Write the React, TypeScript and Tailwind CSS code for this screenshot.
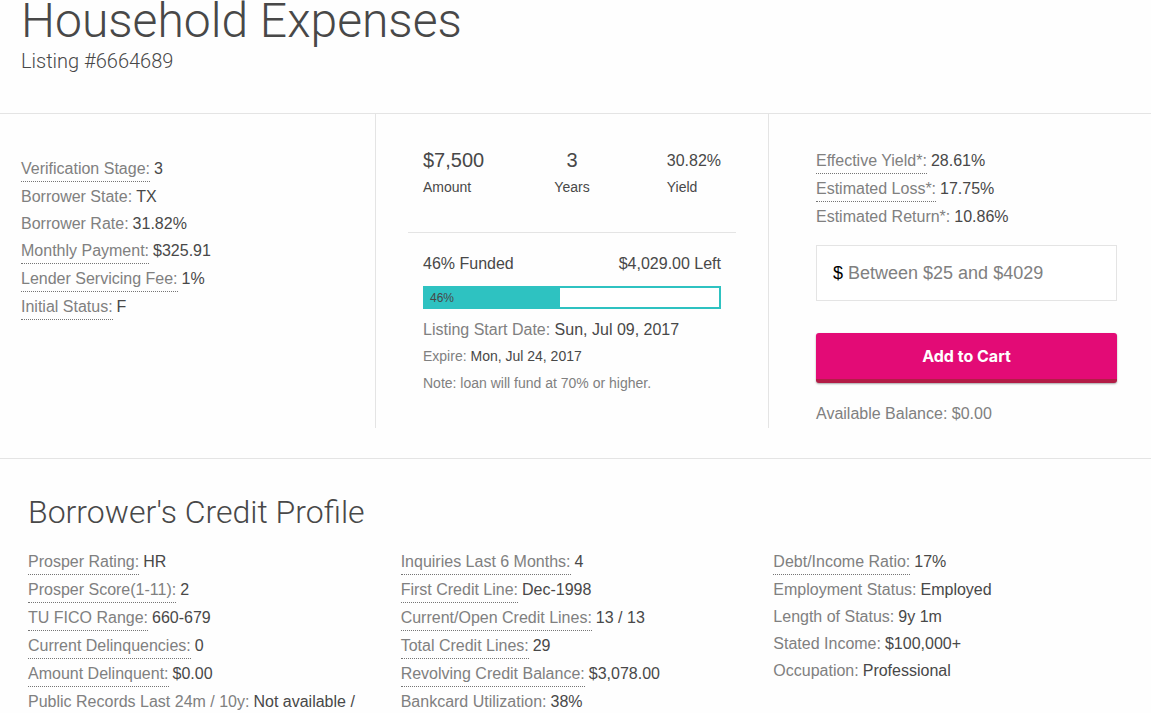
import type { ReactNode } from "react";

type FactProps = { label: string; value: string; hint?: boolean };

const LOAN_FACTS: FactProps[] = [
  { label: "Verification Stage:", value: "3", hint: true },
  { label: "Borrower State:", value: "TX" },
  { label: "Borrower Rate:", value: "31.82%" },
  { label: "Monthly Payment:", value: "$325.91", hint: true },
  { label: "Lender Servicing Fee:", value: "1%", hint: true },
  { label: "Initial Status:", value: "F", hint: true },
];

const RETURN_FACTS: FactProps[] = [
  { label: "Effective Yield*:", value: "28.61%", hint: true },
  { label: "Estimated Loss*:", value: "17.75%", hint: true },
  { label: "Estimated Return*:", value: "10.86%" },
];

const PROFILE: FactProps[][] = [
  [
    { label: "Prosper Rating:", value: "HR", hint: true },
    { label: "Prosper Score(1-11):", value: "2", hint: true },
    { label: "TU FICO Range:", value: "660-679", hint: true },
    { label: "Current Delinquencies:", value: "0", hint: true },
    { label: "Amount Delinquent:", value: "$0.00", hint: true },
    { label: "Public Records Last 24m / 10y:", value: "Not available /" },
  ],
  [
    { label: "Inquiries Last 6 Months:", value: "4", hint: true },
    { label: "First Credit Line:", value: "Dec-1998", hint: true },
    { label: "Current/Open Credit Lines:", value: "13 / 13", hint: true },
    { label: "Total Credit Lines:", value: "29", hint: true },
    { label: "Revolving Credit Balance:", value: "$3,078.00", hint: true },
    { label: "Bankcard Utilization:", value: "38%" },
  ],
  [
    { label: "Debt/Income Ratio:", value: "17%", hint: true },
    { label: "Employment Status:", value: "Employed" },
    { label: "Length of Status:", value: "9y 1m" },
    { label: "Stated Income:", value: "$100,000+" },
    { label: "Occupation:", value: "Professional" },
  ],
];

function Fact({ label, value, hint }: FactProps) {
  return (
    <div className={hint ? "flex items-baseline gap-1 pb-px whitespace-nowrap" : "flex items-baseline gap-1 whitespace-nowrap"}>
      <dt
        className={
          hint
            ? "border-b border-dotted border-[#757575] leading-[25px] text-[#808080]"
            : "leading-[27px] text-[#808080]"
        }
      >
        {label}
      </dt>
      <dd className="leading-[27px]">{value}</dd>
    </div>
  );
}

function FactList({ facts }: { facts: FactProps[] }) {
  return (
    <dl>
      {facts.map((fact) => (
        <Fact key={fact.label} {...fact} />
      ))}
    </dl>
  );
}

function Stat({ value, large, children }: { value: string; large?: boolean; children: ReactNode }) {
  return (
    <div>
      <div className={large ? "text-xl leading-[27px]" : "text-base leading-[27px]"}>{value}</div>
      <div className="text-sm leading-[27px]">{children}</div>
    </div>
  );
}

export default function App() {
  const funded = 46;
  return (
    <main className="h-screen overflow-hidden bg-[#fefefe] font-['Liberation_Sans',Arial,sans-serif] text-base text-[#484848]">
      <header className="border-b border-[#e4e4e4] px-[21px] pb-[38px] font-['Roboto','Liberation_Sans',sans-serif] font-light">
        <h1 className="text-5xl leading-[42px]">Household Expenses</h1>
        <p className="mt-[6px] text-xl leading-[27px]">Listing #6664689</p>
      </header>

      <section className="grid grid-cols-[375fr_394fr_382fr] border-b border-[#e4e4e4] pb-[30px]">
        <div className="pt-[41px] pl-[21px]">
          <FactList facts={LOAN_FACTS} />
        </div>

        <div className="min-h-[314px] border-x border-[#e4e4e4] px-8 pt-8">
          <div className="grid grid-cols-3 border-b border-[#e4e4e4] px-[15px] pt-px pb-[31px]">
            <Stat value="$7,500" large>Amount</Stat>
            <div className="text-center">
              <Stat value="3" large>Years</Stat>
            </div>
            <div className="justify-self-end">
              <Stat value="30.82%">Yield</Stat>
            </div>
          </div>
          <div className="px-[15px] pt-[17px] leading-[27px]">
            <div className="flex justify-between">
              <span>46% Funded</span>
              <span>$4,029.00 Left</span>
            </div>
            <div
              className="mt-[9px] mb-[7px] h-[23px] border-2 border-[#2ec2c1] bg-white"
              role="progressbar"
              aria-label="Funded"
              aria-valuenow={funded}
            >
              <div className="h-full bg-[#2ec2c1] pl-[5px] text-xs leading-5" style={{ width: `${funded}%` }}>
                46%
              </div>
            </div>
            <p><span className="text-[#808080]">Listing Start Date:</span> Sun, Jul 09, 2017</p>
            <p className="text-sm leading-[27px]"><span className="text-[#808080]">Expire:</span> Mon, Jul 24, 2017</p>
            <p className="text-sm leading-[27px] text-[#808080]">Note: loan will fund at 70% or higher.</p>
          </div>
        </div>

        <div className="pt-[33px] pr-[34px] pl-[47px]">
          <FactList facts={RETURN_FACTS} />
          <label className="mt-[15px] flex h-14 items-center gap-[5px] border border-[#e4e4e4] bg-white px-4 text-lg">
            <span className="text-black">$</span>
            <input
              type="text"
              aria-label="Investment amount"
              placeholder="Between $25 and $4029"
              className="w-full min-w-0 bg-transparent outline-none placeholder:text-[#808080]"
            />
          </label>
          <button
            type="button"
            className="mt-8 h-[50px] w-full rounded-[3px] border-b-4 border-[#b31c46] bg-[#e30b76] font-['Inter','Liberation_Sans',sans-serif] text-base font-bold text-white shadow-[0_1px_2px_rgba(0,0,0,0.35)]"
          >
            Add to Cart
          </button>
          <p className="mt-[17px] leading-[27px] text-[#808080]">Available Balance: $0.00</p>
        </div>
      </section>

      <section className="pt-[30px] pr-[5px] pl-7">
        <h2 className="font-['Roboto','Liberation_Sans',sans-serif] text-[32px] leading-[46px] font-light">Borrower's Credit Profile</h2>
        <div className="mt-[13px] grid grid-cols-3">
          {PROFILE.map((facts) => (
            <FactList key={facts[0].label} facts={facts} />
          ))}
        </div>
      </section>
    </main>
  );
}
